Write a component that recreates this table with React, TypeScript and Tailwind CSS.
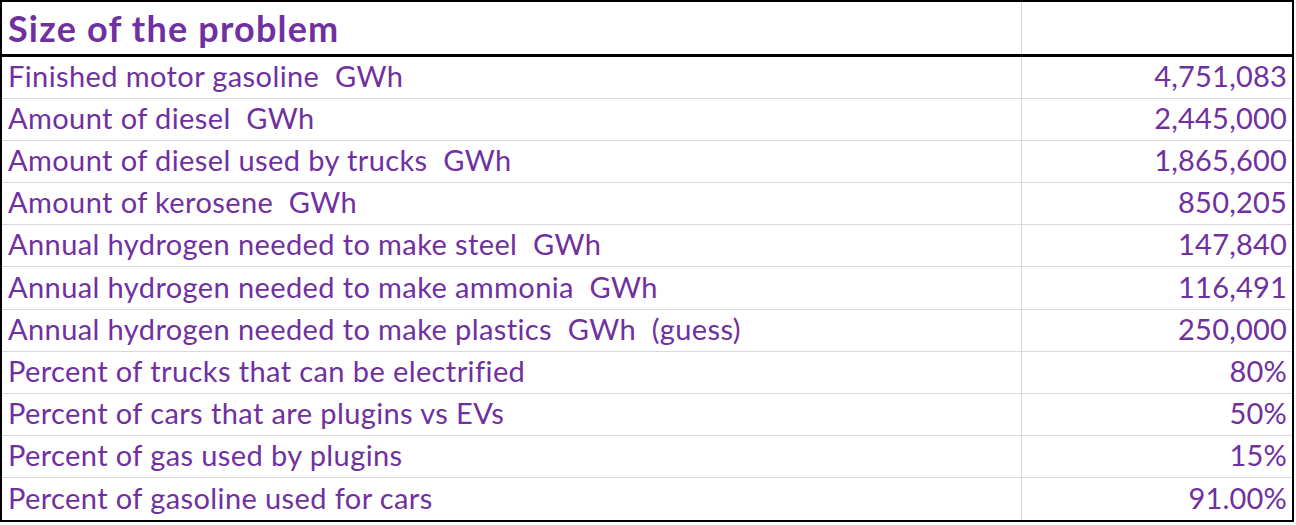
import React from "react";

const rows: [string, string][] = [
  ["Finished motor gasoline  GWh", "4,751,083"],
  ["Amount of diesel  GWh", "2,445,000"],
  ["Amount of diesel used by trucks  GWh", "1,865,600"],
  ["Amount of kerosene  GWh", "850,205"],
  ["Annual hydrogen needed to make steel  GWh", "147,840"],
  ["Annual hydrogen needed to make ammonia  GWh", "116,491"],
  ["Annual hydrogen needed to make plastics  GWh  (guess)", "250,000"],
  ["Percent of trucks that can be electrified", "80%"],
  ["Percent of cars that are plugins vs EVs", "50%"],
  ["Percent of gas used by plugins", "15%"],
  ["Percent of gasoline used for cars", "91.00%"],
];

export default function App() {
  return (
    <div className="w-[1296px] h-[525px] bg-white" style={{ fontFamily: "Lato, 'Liberation Sans', sans-serif" }}>
      <div className="w-[1294px] border-2 border-black text-[#7030a0]">
        <div className="flex h-[55px] border-b-[3px] border-black">
          <div className="w-[1020px] border-r border-[#d9d9d9] pl-[6px] flex items-end pb-[8px] text-[36px] tracking-[1.2px] font-bold leading-none">
            Size of the problem
          </div>
          <div className="flex-1" />
        </div>
        {rows.map(([label, value], i) => (
          <div
            key={i}
            className={
              "flex h-[42.1px] " + (i < rows.length - 1 ? "border-b border-[#d9d9d9]" : "")
            }
          >
            <div className="w-[1020px] border-r border-[#d9d9d9] pl-[6px] flex items-end pb-[8px] text-[29px] tracking-[0.4px] leading-none whitespace-pre">
              {label}
            </div>
            <div className="flex-1 flex items-end justify-end pr-[5px] pb-[8px] text-[29px] tracking-[0.2px] leading-none">
              {value}
            </div>
          </div>
        ))}
      </div>
    </div>
  );
}
